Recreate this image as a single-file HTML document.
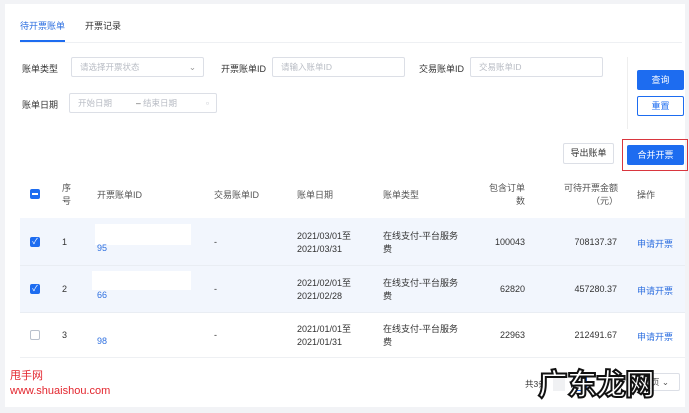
<!DOCTYPE html><html><head><meta charset="utf-8"><style>
*{box-sizing:border-box;margin:0;padding:0}
body{width:689px;height:413px;background:#f2f3f6;font-family:"Liberation Sans","Noto Sans CJK SC",sans-serif;font-size:9px;color:#333;position:relative;overflow:hidden}
.a{position:absolute;white-space:nowrap}
.card{position:absolute;left:5px;top:4px;width:680px;height:403px;background:#fff}
.inp{position:absolute;border:1px solid #dcdfe6;border-radius:2px;height:20px;color:#b8bcc4;font-size:8.5px;line-height:18px;padding-left:8px;background:#fff}
.btn{position:absolute;border-radius:2px;font-size:9px;text-align:center;line-height:20px}
.cb{position:absolute;width:10px;height:10px;border-radius:2px;background:#1d6cf0}
.row{position:absolute;left:20px;width:665px}
.blue{color:#2d6fe0}
</style></head><body>
<div class="card"></div>
<div class="a blue" style="left:20px;top:19px;font-size:9px">待开票账单</div>
<div class="a" style="left:85px;top:19px">开票记录</div>
<div class="a" style="left:20px;top:40px;width:45px;height:2px;background:#1d6cf0"></div>
<div class="a" style="left:20px;top:42px;width:662px;height:1px;background:#eef0f3"></div>

<div class="a" style="left:22px;top:62px">账单类型</div>
<div class="inp" style="left:71px;top:57px;width:133px">请选择开票状态<span style="position:absolute;right:7px;color:#999">⌄</span></div>
<div class="a" style="left:221px;top:62px">开票账单ID</div>
<div class="inp" style="left:272px;top:57px;width:133px">请输入账单ID</div>
<div class="a" style="left:419px;top:62px">交易账单ID</div>
<div class="inp" style="left:470px;top:57px;width:133px">交易账单ID</div>
<div class="a" style="left:627px;top:57px;width:1px;height:72px;background:#eee"></div>
<div class="btn" style="left:637px;top:70px;width:47px;background:#1d6cf0;color:#fff">查询</div>
<div class="btn" style="left:637px;top:96px;width:47px;border:1px solid #1d6cf0;color:#1d6cf0;line-height:18px">重置</div>
<div class="a" style="left:22px;top:98px">账单日期</div>
<div class="inp" style="left:69px;top:93px;width:148px">开始日期<span style="position:absolute;left:66px;color:#555">–</span><span style="position:absolute;left:73px">结束日期</span><span style="position:absolute;right:7px">▫</span></div>

<div class="btn" style="left:563px;top:143px;width:51px;border:1px solid #dcdfe6;line-height:19px;height:21px">导出账单</div>
<div class="a" style="left:622px;top:139px;width:66px;height:32px;border:1.5px solid #d9363e"></div>
<div class="btn" style="left:627px;top:145px;width:57px;background:#1d6cf0;color:#fff">合并开票</div>

<div class="row" style="top:172px;height:46px;background:#fff"></div>
<div class="cb" style="left:30px;top:189px"><div style="position:absolute;left:2px;top:4px;width:6px;height:2px;background:#fff"></div></div>
<div class="a" style="left:62px;top:182px;line-height:13px;color:#555">序<br>号</div>
<div class="a" style="left:97px;top:188px;color:#555">开票账单ID</div>
<div class="a" style="left:214px;top:188px;color:#555">交易账单ID</div>
<div class="a" style="left:297px;top:188px;color:#555">账单日期</div>
<div class="a" style="left:383px;top:188px;color:#555">账单类型</div>
<div class="a" style="left:485px;top:182px;width:40px;text-align:right;line-height:13px;color:#555">包含订单<br>数</div>
<div class="a" style="left:557px;top:182px;width:61px;text-align:right;line-height:13px;color:#555">可待开票金额<br>（元）</div>
<div class="a" style="left:637px;top:188px;color:#555">操作</div>

<div class="row" style="top:218px;height:47px;background:#f2f6fd"></div>
<div class="row" style="top:265px;height:47px;background:#f2f6fd;border-top:1px solid #e9edf3"></div>
<div class="row" style="top:312px;height:46px;background:#fff;border-top:1px solid #e9edf3;border-bottom:1px solid #eef0f3"></div>
<div class="a" style="left:95px;top:224px;width:96px;height:21px;background:#fff"></div>
<div class="a" style="left:92px;top:271px;width:99px;height:19px;background:#fff"></div>

<div class="cb" style="left:30px;top:237px;color:#fff;font-size:8px;line-height:10px;text-align:center">✓</div>
<div class="cb" style="left:30px;top:284px;color:#fff;font-size:8px;line-height:10px;text-align:center">✓</div>
<div class="cb" style="left:30px;top:330px;background:#fff;border:1px solid #b9c1cd"></div>

<div class="a" style="left:62px;top:237px">1</div><div class="a" style="left:62px;top:284px">2</div><div class="a" style="left:62px;top:330px">3</div>
<div class="a blue" style="left:97px;top:243px">95</div><div class="a blue" style="left:97px;top:290px">66</div><div class="a blue" style="left:97px;top:336px">98</div>
<div class="a" style="left:214px;top:237px">-</div><div class="a" style="left:214px;top:284px">-</div><div class="a" style="left:214px;top:330px">-</div>
<div class="a" style="left:297px;top:230px;line-height:13px">2021/03/01至<br>2021/03/31</div>
<div class="a" style="left:297px;top:277px;line-height:13px">2021/02/01至<br>2021/02/28</div>
<div class="a" style="left:297px;top:323px;line-height:13px">2021/01/01至<br>2021/01/31</div>
<div class="a" style="left:383px;top:230px;line-height:13px">在线支付-平台服务<br>费</div>
<div class="a" style="left:383px;top:277px;line-height:13px">在线支付-平台服务<br>费</div>
<div class="a" style="left:383px;top:323px;line-height:13px">在线支付-平台服务<br>费</div>
<div class="a" style="left:470px;top:237px;width:55px;text-align:right">100043</div>
<div class="a" style="left:470px;top:284px;width:55px;text-align:right">62820</div>
<div class="a" style="left:470px;top:330px;width:55px;text-align:right">22963</div>
<div class="a" style="left:550px;top:237px;width:67px;text-align:right">708137.37</div>
<div class="a" style="left:550px;top:284px;width:67px;text-align:right">457280.37</div>
<div class="a" style="left:550px;top:330px;width:67px;text-align:right">212491.67</div>
<div class="a blue" style="left:637px;top:237px">申请开票</div>
<div class="a blue" style="left:637px;top:284px">申请开票</div>
<div class="a blue" style="left:637px;top:330px">申请开票</div>

<div class="a" style="left:525px;top:378px;font-size:8.5px">共3条</div>
<div class="a" style="left:553px;top:373px;width:12px;height:18px;background:#f0f1f3"></div>
<div class="a" style="left:573px;top:373px;width:14px;height:18px;border:1px solid #1d6cf0;border-radius:2px"></div>
<div class="a" style="left:645px;top:373px;width:35px;height:18px;border:1px solid #dcdfe6;border-radius:2px;font-size:8.5px;line-height:16px;padding-left:5px;color:#555">页 ⌄</div>
<div class="a" style="left:538px;top:364px;font-size:30px;font-weight:bold;color:#fff;-webkit-text-stroke:2px #111;letter-spacing:-1px;font-family:'Noto Sans CJK SC',sans-serif;line-height:36px">广东龙网</div>
<div class="a" style="left:10px;top:367px;font-size:11px;color:#e3262e">甩手网</div>
<div class="a" style="left:10px;top:385px;font-size:11px;color:#e3262e">www.shuaishou.com</div>
</body></html>
